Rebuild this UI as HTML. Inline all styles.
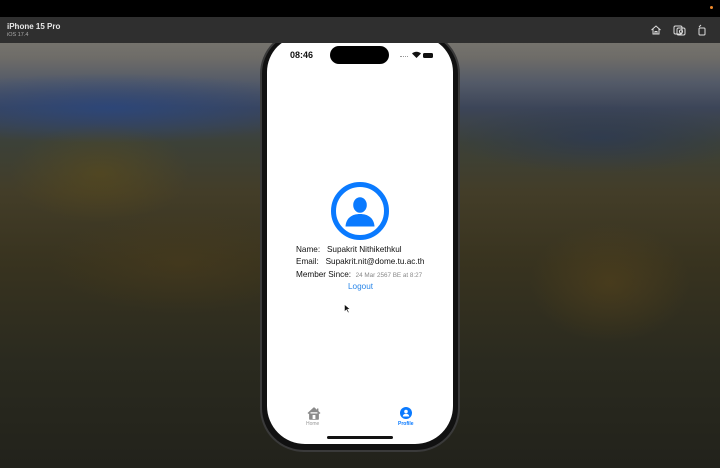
<!DOCTYPE html>
<html><head><style>
*{margin:0;padding:0;box-sizing:border-box}
body{width:720px;height:468px;overflow:hidden;position:relative;font-family:"Liberation Sans",sans-serif;background:#2a2a1c}
.bg{position:absolute;left:0;top:43px;width:720px;height:425px;
background:
radial-gradient(ellipse 90px 50px at 100px 130px,rgba(100,80,20,.45),transparent),
radial-gradient(ellipse 80px 60px at 610px 240px,rgba(100,75,25,.4),transparent),
radial-gradient(ellipse 130px 50px at 180px 220px,rgba(85,65,25,.35),transparent),
radial-gradient(ellipse 220px 35px at 110px 65px,rgba(40,70,130,.75),transparent),
radial-gradient(ellipse 150px 35px at 600px 95px,rgba(40,55,90,.6),transparent),
linear-gradient(180deg,#75736d 0px,#6e6c68 15px,#535a68 40px,#3c4558 65px,#3c4138 100px,#433d28 150px,#38331f 220px,#2a2a1f 320px,#22221b 425px);}
.top{position:absolute;left:0;top:0;width:720px;height:17px;background:#000;z-index:5}
.bar{position:absolute;left:0;top:17px;width:720px;height:26px;background:#2f2f2f;color:#e8e8e8;z-index:5}
.phone{position:absolute;left:260px;top:30px;width:200px;height:422px;background:#111;border-radius:44px;border:2px solid #3a3a3a}
.screen{position:absolute;left:267px;top:36px;width:186px;height:408px;background:#fff;border-radius:36px 36px 38px 38px;overflow:hidden}
.t{position:absolute;font-size:8.2px;color:#111;white-space:nowrap}
</style></head><body>
<div class="bg"></div>
<div class="top"><div style="position:absolute;left:710px;top:6px;width:3px;height:3px;background:#f08a2a;border-radius:50%"></div></div>
<div class="bar">
<div style="position:absolute;left:7px;top:5px;font-size:8px;font-weight:bold">iPhone 15 Pro</div>
<div style="position:absolute;left:7px;top:15px;font-size:5.5px;color:#aaa">iOS 17.4</div>
<svg style="position:absolute;left:650px;top:7px" width="12" height="12" viewBox="0 0 12 12" fill="none" stroke="#ddd" stroke-width="1"><path d="M1.5 6L6 2l4.5 4M3 5v5h6V5M5 10V7.5h2V10"/></svg>
<svg style="position:absolute;left:673px;top:7px" width="13" height="12" viewBox="0 0 13 12" fill="none" stroke="#ddd" stroke-width="1"><rect x="1" y="2" width="8" height="8" rx="1.5"/><rect x="4" y="4" width="8" height="7" rx="1.5"/><circle cx="8" cy="7.5" r="1.6"/></svg>
<svg style="position:absolute;left:697px;top:7px" width="10" height="12" viewBox="0 0 10 12" fill="none" stroke="#ddd" stroke-width="1"><rect x="2" y="4" width="6" height="7" rx="1"/><path d="M2 3l2-2"/></svg>
</div>
<div class="phone"></div>
<div class="screen">
<div style="position:absolute;left:23px;top:14px;font-size:9px;font-weight:bold;color:#111">08:46</div>
<div style="position:absolute;left:63px;top:10px;width:59px;height:18px;background:#000;border-radius:9px"></div>
<div style="position:absolute;left:133px;top:20px;width:8px;height:1px;border-top:1px dotted #999"></div>
<svg style="position:absolute;left:145px;top:15px" width="9" height="7" viewBox="0 0 9 7"><path d="M4.5 7L0 2.5A6.5 6.5 0 0 1 9 2.5Z" fill="#111"/></svg>
<div style="position:absolute;left:156px;top:17px;width:10px;height:5px;background:#111;border-radius:1.5px"></div>
<svg style="position:absolute;left:63px;top:145px" width="60" height="60" viewBox="0 0 60 60"><circle cx="30" cy="30" r="26.5" fill="none" stroke="#0a7aff" stroke-width="5"/><ellipse cx="30" cy="24" rx="6.8" ry="7.8" fill="#0a7aff"/><path d="M15.5 45.5C16 37 22 33 30 33s14 4 14.5 12.5Z" fill="#0a7aff"/></svg>
<div class="t" style="left:29px;top:209px">Name:&nbsp;&nbsp; Supakrit Nithikethkul</div>
<div class="t" style="left:29px;top:221px">Email:&nbsp;&nbsp; Supakrit.nit@dome.tu.ac.th</div>
<div class="t" style="left:29px;top:234px">Member Since:&nbsp; <span style="font-size:6.3px;color:#888">24 Mar 2567 BE at 8:27</span></div>
<div class="t" style="left:81px;top:246px;color:#2a86e8">Logout</div>
<svg style="position:absolute;left:77px;top:268px" width="6" height="9" viewBox="0 0 6 9"><path d="M0.5 0.5v7l2-1.8 1.5 3 1-.5-1.5-3h2.5Z" fill="#111" stroke="#fff" stroke-width=".5"/></svg>
<svg style="position:absolute;left:40px;top:370px" width="14" height="14" viewBox="0 0 14 14"><path d="M1 7.5L7 2l6 5.5M2.8 6.2V13h8.4V6.2" fill="#8a8a8a" stroke="#8a8a8a" stroke-width="1.4" stroke-linejoin="round"/><rect x="5.6" y="9" width="2.8" height="4" fill="#fff"/><rect x="10" y="2.5" width="1.4" height="3" fill="#8a8a8a"/></svg>
<div style="position:absolute;left:39px;top:385px;font-size:5px;color:#999">Home</div>
<svg style="position:absolute;left:133px;top:371px" width="12" height="12" viewBox="0 0 12 12"><circle cx="6" cy="6" r="6" fill="#0a7aff"/><circle cx="6" cy="4.5" r="1.8" fill="#fff"/><path d="M2.8 9.5C3 7.5 4.3 6.8 6 6.8s3 .7 3.2 2.7Z" fill="#fff"/></svg>
<div style="position:absolute;left:131px;top:385px;font-size:5px;color:#0a7aff;font-weight:bold">Profile</div>
<div style="position:absolute;left:60px;top:400px;width:66px;height:2.5px;background:#111;border-radius:2px"></div>
</div>
</body></html>
